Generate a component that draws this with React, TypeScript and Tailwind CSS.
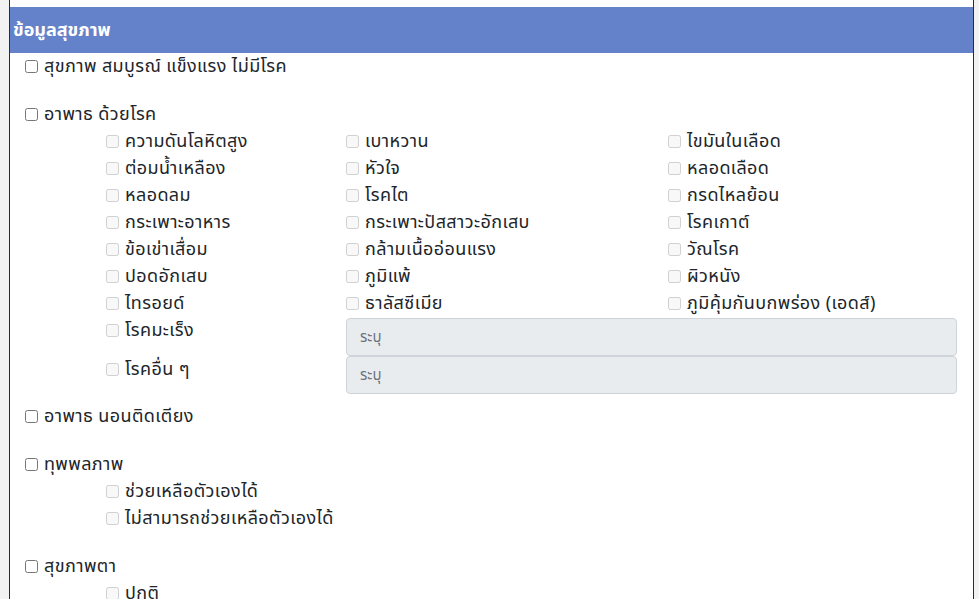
import React from "react";

const font = { fontFamily: '"Noto Sans Thai", "Noto Sans", "DejaVu Sans", sans-serif' };

function Main({ label, className = "" }: { label: string; className?: string }) {
  return (
    <label className={"flex items-center h-[27px] pl-[15px] " + className}>
      <input type="checkbox" className="w-[13px] h-[13px] mr-[6px] shrink-0" />
      <span className="whitespace-nowrap">{label}</span>
    </label>
  );
}

function Sub({ label, w }: { label: string; w?: string }) {
  return (
    <label className={"flex items-center h-[27px] " + (w ?? "")}>
      <input type="checkbox" disabled className="w-[13px] h-[13px] mr-[6px] shrink-0" />
      <span className="whitespace-nowrap">{label}</span>
    </label>
  );
}

const grid: [string, string, string][] = [
  ["ความดันโลหิตสูง", "เบาหวาน", "ไขมันในเลือด"],
  ["ต่อมน้ำเหลือง", "หัวใจ", "หลอดเลือด"],
  ["หลอดลม", "โรคไต", "กรดไหลย้อน"],
  ["กระเพาะอาหาร", "กระเพาะปัสสาวะอักเสบ", "โรคเกาต์"],
  ["ข้อเข่าเสื่อม", "กล้ามเนื้ออ่อนแรง", "วัณโรค"],
  ["ปอดอักเสบ", "ภูมิแพ้", "ผิวหนัง"],
  ["ไทรอยด์", "ธาลัสซีเมีย", "ภูมิคุ้มกันบกพร่อง (เอดส์)"],
];

export default function App() {
  return (
    <div className="w-[979px] h-[599px] overflow-hidden bg-[#f2f2f2]" style={font}>
      <div className="ml-[9px] mr-[5px] h-full bg-white border-x border-[#1f2a5a] pt-[7px] text-[18px] tracking-[0.4px] leading-[27px] text-[#212529]">
        <div className="h-[46px] bg-[#6482ca] flex items-center pl-[3px] text-white font-bold text-[18px] tracking-normal">
          ข้อมูลสุขภาพ
        </div>
        <Main label="สุขภาพ สมบูรณ์ แข็งแรง ไม่มีโรค" className="mb-[21px]" />
        <Main label="อาพาธ ด้วยโรค" />
        <div className="pl-[96px] pr-[16px]">
          {grid.map((r, i) => (
            <div key={i} className="flex">
              <Sub label={r[0]} w="w-[240px] shrink-0" />
              <Sub label={r[1]} w="w-[322px] shrink-0" />
              <Sub label={r[2]} />
            </div>
          ))}
          <div className="flex items-start">
            <Sub label="โรคมะเร็ง" w="w-[240px] shrink-0" />
            <input
              disabled
              placeholder="ระบุ"
              className="mt-[1px] flex-1 h-[38px] bg-[#e9ecef] border border-[#ced4da] rounded-[4px] px-[13px] text-[15px] tracking-normal placeholder:text-[#6c757d]"
            />
          </div>
          <div className="flex items-start">
            <Sub label="โรคอื่น ๆ" w="w-[240px] shrink-0" />
            <input
              disabled
              placeholder="ระบุ"
              className="flex-1 h-[38px] bg-[#e9ecef] border border-[#ced4da] rounded-[4px] px-[13px] text-[15px] tracking-normal placeholder:text-[#6c757d]"
            />
          </div>
        </div>
        <Main label="อาพาธ นอนติดเตียง" className="mt-[9px] mb-[21px]" />
        <Main label="ทุพพลภาพ" />
        <div className="pl-[96px]">
          <Sub label="ช่วยเหลือตัวเองได้" />
          <Sub label="ไม่สามารถช่วยเหลือตัวเองได้" />
        </div>
        <Main label="สุขภาพตา" className="mt-[21px]" />
        <div className="pl-[96px]">
          <Sub label="ปกติ" />
        </div>
      </div>
    </div>
  );
}
